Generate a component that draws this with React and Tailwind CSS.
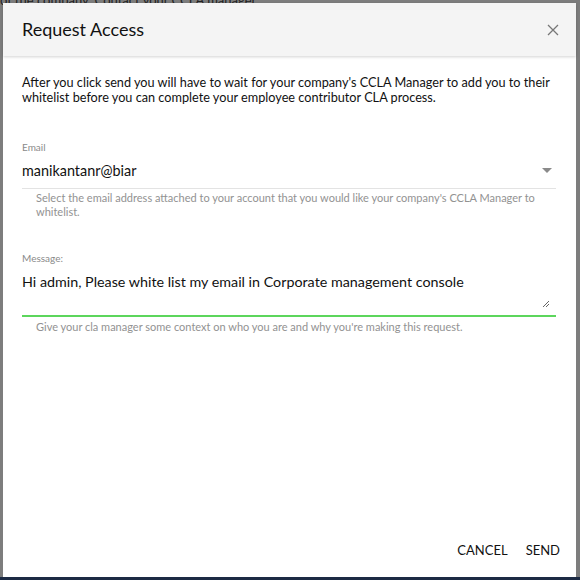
const App = () => {
  return (
    <div className="relative h-[580px] w-[580px] overflow-hidden bg-[#7d7d7d] p-[3px] font-['Lato',sans-serif]">
      <div className="absolute left-0 top-[-9px] text-[13px] text-[#222]">
        of the company. Contact your CCLA manager.
      </div>
      <div className="absolute bottom-0 left-0 h-[3px] w-full bg-[#1c2a44]" />
      <div className="relative flex h-[574px] w-[573px] flex-col bg-white">
        <div className="flex h-[53px] items-center justify-between bg-[#f4f4f4] pl-[19px] pr-[17px] shadow-[0_1px_3px_rgba(0,0,0,0.18)]">
          <h1 className="text-[18px] text-[#111]">Request Access</h1>
          <button className="text-[#777]">
            <svg width="12" height="12" viewBox="0 0 12 12" stroke="currentColor" strokeWidth="1.3">
              <path d="M1 1L11 11M11 1L1 11" />
            </svg>
          </button>
        </div>
        <div className="flex flex-1 flex-col pl-[19px] pr-[20px] pt-[19px]">
          <p className="-mr-[2px] text-[12.7px] leading-[15px] text-[#111]">
            After you click send you will have to wait for your company's CCLA Manager to add you to their
            whitelist before you can complete your employee contributor CLA process.
          </p>
          <div className="mt-[35px]">
            <div className="text-[10px] text-[#8a8a8a]">Email</div>
            <div className="flex items-center justify-between border-b border-[#e3e3e3] pb-[6px] pt-[5px]">
              <span className="text-[14.4px] text-[#111]">manikantanr@biar</span>
              <svg width="10" height="6" viewBox="0 0 10 6" className="mr-[4px]">
                <path d="M0 0H10L5 5Z" fill="#8a8a8a" />
              </svg>
            </div>
            <p className="mt-[2px] pl-[14px] pr-[17px] text-[11px] leading-[14px] text-[#929292]">
              Select the email address attached to your account that you would like your company's CCLA Manager to
              whitelist.
            </p>
          </div>
          <div className="mt-[32px]">
            <div className="text-[10px] text-[#8a8a8a]">Message:</div>
            <div className="relative border-b-2 border-[#5cd65c] pb-[10px] pt-[5px]">
              <div className="h-[34px] text-[14.3px] text-[#111]">
                Hi admin, Please white list my email in Corporate management console
              </div>
              <svg width="8" height="8" viewBox="0 0 8 8" className="absolute bottom-[7px] right-[6px]" stroke="#555" strokeWidth="0.9">
                <path d="M1 7L7 1M4 7L7 4" />
              </svg>
            </div>
            <p className="mt-[3px] pl-[14px] text-[11px] leading-[14px] text-[#929292]">
              Give your cla manager some context on who you are and why you're making this request.
            </p>
          </div>
        </div>
        <div className="flex justify-end gap-[18px] pb-[17px] pr-[16px]">
          <button className="text-[13px] text-[#111]">CANCEL</button>
          <button className="text-[13px] text-[#111]">SEND</button>
        </div>
      </div>
    </div>
  );
};

export default App;
